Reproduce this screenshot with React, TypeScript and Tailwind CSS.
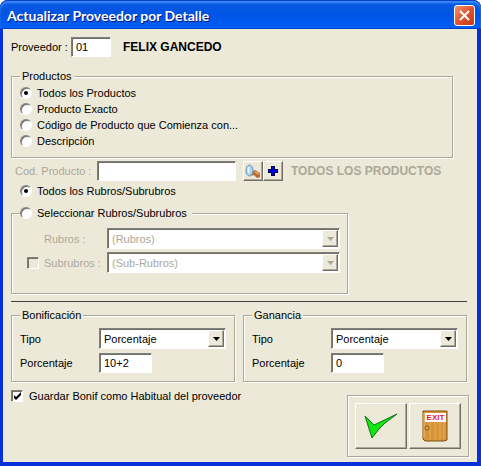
import React, { useState } from 'react';

const sunken =
    'border border-t-[#808080] border-l-[#808080] border-b-white border-r-white shadow-[inset_1px_1px_0_#716f64]';
const raised =
    'border border-t-white border-l-white border-b-[#716f64] border-r-[#716f64] shadow-[inset_-1px_-1px_0_#aca899] bg-[#ece9d8]';
const group =
    'min-w-0 border border-[#aca899] shadow-[1px_1px_0_#fff,inset_1px_1px_0_#fff]';

type RadioProps = {
    name: string;
    label: string;
    checked: boolean;
    onChange: () => void;
};

const Radio: React.FC<RadioProps> = ({ name, label, checked, onChange }) => (
    <label className="flex h-4 items-center gap-1">
        <input
            type="radio"
            name={name}
            checked={checked}
            onChange={onChange}
            className="grid size-3 appearance-none place-items-center rounded-full border border-t-[#808080] border-l-[#808080] border-b-white border-r-white bg-white shadow-[inset_1px_1px_0_#716f64] before:size-1 before:rounded-full checked:before:bg-black"
        />
        <span className="px-px">{label}</span>
    </label>
);

type CheckProps = {
    id: string;
    checked: boolean;
    disabled?: boolean;
    onChange?: () => void;
};

const Check: React.FC<CheckProps> = ({ id, checked, disabled, onChange }) => (
    <span className="relative flex size-3">
        <input
            id={id}
            type="checkbox"
            checked={checked}
            disabled={disabled}
            onChange={onChange}
            readOnly={!onChange}
            className={`size-3 appearance-none bg-white disabled:bg-[#ece9d8] ${sunken}`}
        />
        {checked && (
            <svg viewBox="0 0 12 12" className="pointer-events-none absolute inset-0 size-3">
                <path d="M3 5v3l2 2 5-5V2L5 7z" fill="#000" />
            </svg>
        )}
    </span>
);

type ComboProps = {
    id: string;
    value: string;
    disabled?: boolean;
};

const Combo: React.FC<ComboProps> = ({ id, value, disabled }) => (
    <div className={`relative h-[21px] min-w-0 flex-1 bg-white ${sunken}`}>
        <select
            id={id}
            disabled={disabled}
            className="h-full w-full appearance-none bg-transparent pr-5 pl-1 text-black opacity-100 outline-none disabled:text-[#aca899]"
        >
            <option>{value}</option>
        </select>
        <span
            className={`pointer-events-none absolute top-px right-px bottom-px flex w-4 items-center justify-center ${raised}`}
        >
            <svg viewBox="0 0 7 4" className={`h-1 w-[7px] ${disabled ? 'text-[#aca899]' : 'text-black'}`}>
                <path d="M0 0h7L3.500 4z" fill="currentColor" />
            </svg>
        </span>
    </div>
);

type MarginGroupProps = {
    id: string;
    title: string;
    amount: string;
    focused?: boolean;
};

const MarginGroup: React.FC<MarginGroupProps> = ({ id, title, amount, focused }) => {
    const [value, setValue] = useState(amount);

    return (
        <fieldset className={`flex flex-col px-2 pb-2 ${group}`}>
            <legend className="bg-[#ece9d8] px-0.5">{title}</legend>
            <div className="mt-1.5 flex items-center">
                <label htmlFor={`${id}-tipo`} className="w-[79px]">Tipo</label>
                <Combo id={`${id}-tipo`} value="Porcentaje" />
            </div>
            <div className="mt-1 flex items-center">
                <label htmlFor={`${id}-porcentaje`} className="w-[79px]">Porcentaje</label>
                <input
                    id={`${id}-porcentaje`}
                    type="text"
                    value={value}
                    autoFocus={focused}
                    onChange={(e) => setValue(e.target.value)}
                    className={`h-5 w-[53px] bg-white px-1 outline-none ${sunken}`}
                />
            </div>
        </fieldset>
    );
};

const productOptions = [
    'Todos los Productos',
    'Producto Exacto',
    'Código de Producto que Comienza con...',
    'Descripción',
];

export default function App() {
    const [supplier, setSupplier] = useState('01');
    const [product, setProduct] = useState(productOptions[0]);
    const [allCategories, setAllCategories] = useState(true);
    const [saveDefault, setSaveDefault] = useState(true);

    return (
        <div className="flex min-h-screen flex-col rounded-t-lg bg-[#0831d9] font-['Liberation_Sans',Arial,sans-serif] text-[11px] leading-[14px] text-black">
            {/* Title bar */}
            <header className="flex h-[29px] items-center justify-between rounded-t-lg bg-linear-to-b from-[#0b5be0] via-[#0054e3] to-[#0160fb] pr-1.5 pl-[7px] shadow-[inset_0_1px_0_#0a3fc4,inset_0_3px_2px_#3c8cf8,inset_0_-1px_0_#0040c8]">
                <h1 className="pt-0.5 font-['Lato',sans-serif] text-[14px] font-bold text-white [text-shadow:1px_1px_0_#0a1883]">
                    Actualizar Proveedor por Detalle
                </h1>
                <button
                    type="button"
                    aria-label="Cerrar"
                    className="mt-0.5 flex size-[21px] items-center justify-center rounded-[3px] border border-white bg-linear-to-br from-[#f0906e] via-[#e2532c] to-[#c23a10]"
                >
                    <svg viewBox="0 0 11 11" className="size-[11px]">
                        <path d="M1 1l9 9M10 1l-9 9" stroke="#fff" strokeWidth="2" />
                    </svg>
                </button>
            </header>

            <main className="mr-1 mb-1 ml-[3px] flex flex-1 flex-col bg-[#ece9d8] pt-2 pr-2.5 pb-1 pl-2">
                <div className="flex items-center">
                    <label htmlFor="proveedor" className="w-[60px]">Proveedor :</label>
                    <input
                        id="proveedor"
                        type="text"
                        value={supplier}
                        onChange={(e) => setSupplier(e.target.value)}
                        className={`h-5 w-10 bg-white px-1 outline-none ${sunken}`}
                    />
                    <strong className="ml-3 text-xs">FELIX GANCEDO</strong>
                </div>

                {/* Productos */}
                <fieldset className={`mt-3 mr-3.5 flex flex-col px-2 pb-2 ${group}`}>
                    <legend className="bg-[#ece9d8] px-0.5">Productos</legend>
                    <div className="mt-0.5">
                        {productOptions.map((option) => (
                            <Radio
                                key={option}
                                name="producto"
                                label={option}
                                checked={product === option}
                                onChange={() => setProduct(option)}
                            />
                        ))}
                    </div>
                </fieldset>

                <div className="mt-[3px] flex items-center">
                    <label htmlFor="codigo" className="w-[86px] pl-1 text-[#aca899]">Cod. Producto :</label>
                    <input id="codigo" type="text" disabled className={`h-5 w-[139px] bg-white px-1 ${sunken}`} />
                    <button
                        type="button"
                        aria-label="Buscar"
                        className={`ml-[7px] flex size-5 items-center justify-center ${raised}`}
                    >
                        <svg viewBox="0 0 16 16" className="size-4">
                            <path d="M7 9l3-2 5 3v4l-3 1-3-3-3 1z" fill="#b86a30" />
                            <path d="M10 9l4 2" stroke="#f0a868" strokeWidth="1.500" />
                            <ellipse cx="4.500" cy="7.500" rx="3.500" ry="5.500" fill="#a8d4f4" stroke="#6890b8" />
                            <path d="M3.500 4v6" stroke="#fff" strokeWidth="1.500" />
                        </svg>
                    </button>
                    <button
                        type="button"
                        aria-label="Agregar"
                        className={`flex size-5 items-center justify-center ${raised}`}
                    >
                        <svg viewBox="0 0 10 10" className="size-2.5">
                            <path d="M3 0h4v3h3v4H7v3H3V7H0V3h3z" fill="#000040" />
                            <path d="M4 1h2v3h3v2H6v3H4V6H1V4h3z" fill="#0000e8" />
                        </svg>
                    </button>
                    <strong className="ml-2 text-xs text-[#aca899]">TODOS LOS PRODUCTOS</strong>
                </div>

                {/* Rubros */}
                <div className="mt-0.5 pl-[9px]">
                    <Radio
                        name="rubros"
                        label="Todos los Rubros/Subrubros"
                        checked={allCategories}
                        onChange={() => setAllCategories(true)}
                    />
                </div>
                <fieldset className={`mt-1.5 flex w-full max-w-[337px] flex-col pr-[7px] pb-5 pl-2 ${group}`}>
                    <legend className="bg-[#ece9d8] pr-1">
                        <Radio
                            name="rubros"
                            label="Seleccionar Rubros/Subrubros"
                            checked={!allCategories}
                            onChange={() => setAllCategories(false)}
                        />
                    </legend>
                    <div className="mt-[7px] flex items-center">
                        <label htmlFor="rubro" className="w-[87px] pl-6 text-[#aca899]">Rubros :</label>
                        <Combo id="rubro" value="(Rubros)" disabled={allCategories} />
                    </div>
                    <div className="mt-[3px] flex items-center">
                        <div className="flex w-[87px] items-center gap-[5px] pl-[7px]">
                            <Check id="usar-subrubro" checked={false} disabled />
                            <label htmlFor="usar-subrubro" className="text-[#aca899]">Subrubros :</label>
                        </div>
                        <Combo id="subrubro" value="(Sub-Rubros)" disabled={allCategories} />
                    </div>
                </fieldset>

                <hr className="mt-[7px] border-t border-[#404040]" />

                <div className="mt-1.5 grid grid-cols-2 gap-2">
                    <MarginGroup id="bonificacion" title="Bonificación" amount="10+2" focused />
                    <MarginGroup id="ganancia" title="Ganancia" amount="0" />
                </div>

                <footer className="mt-[7px] flex items-start justify-between">
                    <div className="flex items-center gap-1.5">
                        <Check id="guardar" checked={saveDefault} onChange={() => setSaveDefault(!saveDefault)} />
                        <label htmlFor="guardar">Guardar Bonif como Habitual del proveedor</label>
                    </div>
                    <div className={`mt-1.5 -mr-0.5 flex gap-0.5 p-[7px] ${group}`}>
                        <button
                            type="button"
                            aria-label="Aceptar"
                            className={`flex h-[46px] w-[52px] items-center justify-center ${raised}`}
                        >
                            <svg viewBox="0 0 34 26" className="h-[26px] w-[34px]">
                                <path
                                    d="M1 3l5 5 4 4L33 1 21 10 15 16 8 25z"
                                    fill="#14e614"
                                    stroke="#107010"
                                    strokeLinejoin="round"
                                />
                            </svg>
                        </button>
                        <button
                            type="button"
                            aria-label="Salir"
                            className={`flex h-[46px] w-[52px] items-center justify-center ${raised}`}
                        >
                            <svg viewBox="0 0 26 32" className="h-8 w-[26px]">
                                <path d="M1 1h24v29l-3 1H3l-2-2z" fill="#d89438" stroke="#85500f" />
                                <path d="M8 12v18M13 12v18M18 12v18M22 12v17" stroke="#e8ae58" />
                                <path d="M2 3v25" stroke="#f0c070" />
                                <rect x="3" y="3" width="21" height="9" fill="#fff" />
                                <text x="13.500" y="10" textAnchor="middle" fontSize="8" fontWeight="bold" fill="#e01840">
                                    EXIT
                                </text>
                                <circle cx="5" cy="18" r="2" fill="#e8b050" stroke="#85500f" />
                            </svg>
                        </button>
                    </div>
                </footer>
            </main>
        </div>
    );
}
